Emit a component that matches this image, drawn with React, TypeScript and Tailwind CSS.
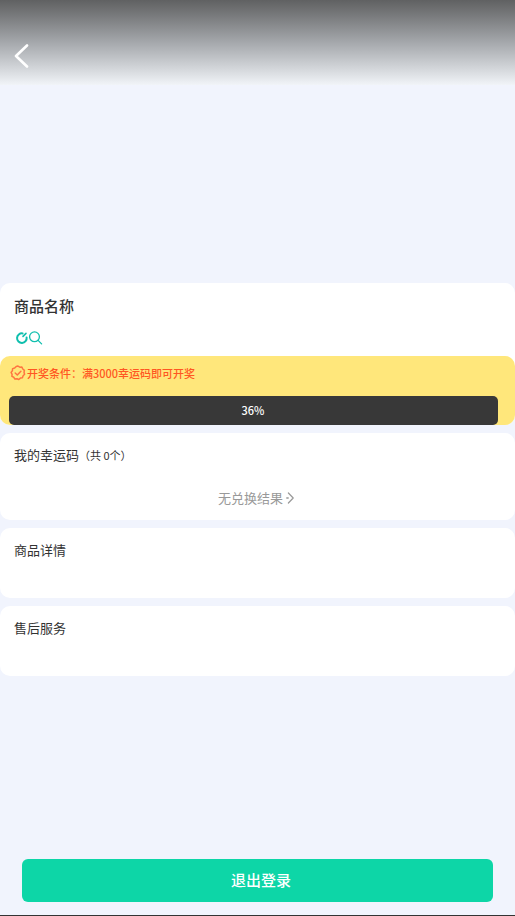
import type { ReactNode } from 'react';

const REQUIRED_CODES = 3000;

const BackIcon = () => (
    <svg className="h-6 w-4" viewBox="0 0 16 24" fill="none" stroke="currentColor" strokeWidth="2.6" strokeLinecap="round" strokeLinejoin="round" aria-hidden="true">
        <path d="M13 1.5 2 12 13 22.5" />
    </svg>
);

const RefreshIcon = () => (
    <svg className="h-[14px] w-[13px]" viewBox="0 0 13 14" fill="none" stroke="currentColor" strokeWidth="2" strokeLinecap="round" aria-hidden="true">
        <path d="M7.6 2.4A4.8 4.8 0 1 0 11.6 6.4" />
        <path d="M11 2.4 8 5.4" strokeWidth="1.6" />
    </svg>
);

const SearchIcon = () => (
    <svg className="h-[14px] w-[14px]" viewBox="0 0 14 14" fill="none" stroke="currentColor" strokeWidth="1.3" strokeLinecap="round" aria-hidden="true">
        <circle cx="5.5" cy="5.8" r="4.9" />
        <path d="M9.1 9.4 12.6 12.9" />
    </svg>
);

const BadgeIcon = () => (
    <svg className="h-4 w-4 text-[#ff7440]" viewBox="0 0 16 16" fill="none" stroke="currentColor" strokeWidth="1.5" strokeLinecap="round" strokeLinejoin="round" aria-hidden="true">
        <path d="M8 1.1 9.8 2.2 11.9 2.1 12.8 4 14.4 5.3 14 7.3 14.6 9.3 13.1 10.7 12.4 12.7 10.4 13.1 8.8 14.5 7 13.7 4.9 14 3.8 12.3 1.9 11.4 2.1 9.3 1.1 7.4 2.4 5.8 2.6 3.6 4.7 3 6.2 1.5Z" />
        <path d="m5.2 8 2.1 2 3.6-3.8" />
    </svg>
);

const ArrowIcon = () => (
    <svg className="h-3 w-2" viewBox="0 0 8 12" fill="none" stroke="currentColor" strokeWidth="1.2" strokeLinecap="round" strokeLinejoin="round" aria-hidden="true">
        <path d="M2.4 1 7.2 6 2.4 11" />
        <path d="M.8 6h1.4" strokeWidth="1.4" />
    </svg>
);

const Card = ({ title, children }: { title: ReactNode; children?: ReactNode }) => (
    <section className="min-h-[70px] rounded-[10px] bg-white px-[14px] pt-3">
        <h2 className="text-[13px] leading-5">{title}</h2>
        {children}
    </section>
);

const App = () => {
    const percent = 36;

    return (
        <div
            lang="zh-CN"
            className="flex min-h-screen flex-col border-b border-[#333333] bg-[#f1f4fd] font-['Noto_Sans_CJK_SC',sans-serif] text-[#333333]"
        >
            <header className="h-[283px]">
                <div className="flex h-[85px] items-end bg-linear-to-b from-[#606162] via-[#a5a8ac] to-[#f1f4f8] px-[14px] pb-[17px]">
                    <button type="button" aria-label="返回" className="text-white">
                        <BackIcon />
                    </button>
                </div>
            </header>

            <main className="flex flex-1 flex-col gap-2">
                <section className="rounded-[10px] bg-white">
                    <div className="px-[14px] pt-[11px] pb-[11px]">
                        <h1 className="text-[15px] leading-6 font-medium">商品名称</h1>
                        <div className="mt-[13px] flex gap-px pl-px text-[#10bfae]">
                            <RefreshIcon />
                            <SearchIcon />
                        </div>
                    </div>
                    <div className="rounded-[10px] bg-[#ffe77b] pt-[9px] pr-[17px] pl-[9px]">
                        <p className="flex items-center gap-px pl-px text-[11px] leading-4 font-medium text-[#ff5722]">
                            <BadgeIcon />
                            <span>开奖条件：满{REQUIRED_CODES}幸运码即可开奖</span>
                        </p>
                        <div
                            role="progressbar"
                            aria-valuenow={percent}
                            aria-valuemin={0}
                            aria-valuemax={100}
                            aria-label="开奖进度"
                            className="mt-[15px] flex h-[29px] items-center justify-center rounded-[5px] bg-[#383838] pr-px text-[11px] font-medium text-white"
                        >
                            {percent}%
                        </div>
                    </div>
                </section>

                <Card title={<>我的幸运码<span className="text-[11px]">（共 0个）</span></>}>
                    <a href="#results" className="mt-[23px] mb-3 flex items-center justify-center gap-[3px] pr-[3px] text-[13px] leading-5 text-[#999999]">
                        无兑换结果
                        <ArrowIcon />
                    </a>
                </Card>
                <Card title="商品详情" />
                <Card title="售后服务" />
            </main>

            <footer className="px-[22px] pb-[13px]">
                <button type="button" className="h-[43px] w-full rounded-md bg-[#0dd6a7] pl-[7px] text-[15px] font-medium text-white">
                    退出登录
                </button>
            </footer>
        </div>
    );
};

export default App;
